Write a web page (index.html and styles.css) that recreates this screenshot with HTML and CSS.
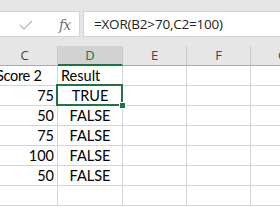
FILE: index.html
```html
<!DOCTYPE html>
<html>
<head>
<meta charset="utf-8">
<link rel="stylesheet" href="styles.css">
</head>
<body>
<div class="app">
  <div class="fbar">
    <div class="ctrls">
      <span class="cancel">✕</span>
      <svg class="check" width="14" height="10" viewBox="0 0 14 10"><path d="M1 5 L5 9 L13 1" fill="none" stroke="#c3c3c3" stroke-width="1.6"/></svg>
      <span class="fx">fx</span>
    </div>
    <div class="formula">=XOR(B2&gt;70,C2=100)</div>
  </div>
  <div class="sheet">
    <div class="row head">
      <div class="c cc">C</div>
      <div class="c cd sel">D</div>
      <div class="c ce">E</div>
      <div class="c cf">F</div>
      <div class="c cg">G</div>
    </div>
    <div class="row">
      <div class="c cc txt">Score 2</div>
      <div class="c cd txt">Result</div>
      <div class="c ce"></div><div class="c cf"></div><div class="c cg"></div>
    </div>
    <div class="row">
      <div class="c cc num">75</div>
      <div class="c cd mid active">TRUE<span class="handle"></span></div>
      <div class="c ce"></div><div class="c cf"></div><div class="c cg"></div>
    </div>
    <div class="row">
      <div class="c cc num">50</div>
      <div class="c cd mid">FALSE</div>
      <div class="c ce"></div><div class="c cf"></div><div class="c cg"></div>
    </div>
    <div class="row">
      <div class="c cc num">75</div>
      <div class="c cd mid">FALSE</div>
      <div class="c ce"></div><div class="c cf"></div><div class="c cg"></div>
    </div>
    <div class="row">
      <div class="c cc num">100</div>
      <div class="c cd mid">FALSE</div>
      <div class="c ce"></div><div class="c cf"></div><div class="c cg"></div>
    </div>
    <div class="row">
      <div class="c cc num">50</div>
      <div class="c cd mid">FALSE</div>
      <div class="c ce"></div><div class="c cf"></div><div class="c cg"></div>
    </div>
    <div class="row">
      <div class="c cc"></div><div class="c cd"></div>
      <div class="c ce"></div><div class="c cf"></div><div class="c cg"></div>
    </div>
  </div>
</div>
</body>
</html>
```
FILE: styles.css
```css
html, body { margin: 0; padding: 0; }
body { width: 280px; height: 207px; overflow: hidden; background: #fff; font-family: Lato, "Liberation Sans", sans-serif; }
.app { width: 280px; height: 207px; overflow: hidden; }
.fbar { background: #e6e6e6; height: 46px; box-sizing: border-box; padding-top: 11px; display: flex; gap: 3px; }
.ctrls { width: 86px; height: 26px; margin-left: -6px; box-sizing: border-box; background: #fff; border: 1px solid #d4d4d4; display: flex; align-items: center; position: relative; }
.cancel { color: #c3c3c3; font-size: 13px; width: 12px; margin-left: -4px; }
.check { margin-left: 16px; margin-top: 1px; }
.fx { font-family: "DejaVu Serif", "Liberation Serif", serif; font-style: italic; color: #6f6f6f; font-size: 14px; margin-left: 26px; margin-top: 1px; letter-spacing: -1px; }
.formula { flex: 1; height: 26px; box-sizing: border-box; background: #fff; border: 1px solid #d4d4d4; border-right: none; padding-left: 10px; font-family: "Open Sans", "Liberation Sans", sans-serif; font-size: 13.5px; line-height: 24px; color: #222; letter-spacing: -0.2px; }
.sheet { position: relative; }
.row { display: flex; height: 20px; }
.c { box-sizing: border-box; height: 20px; border-right: 1px solid #d4d4d4; border-bottom: 1px solid #d4d4d4; font-size: 14.5px; line-height: 19px; color: #000; white-space: nowrap; overflow: hidden; position: relative; }
.cc { width: 58px; }
.cd { width: 65px; }
.ce { width: 64px; }
.cf { width: 64px; }
.cg { flex: 1; border-right: none; }
.head .c { background: #e6e6e6; border-right-color: #c8c8c8; border-bottom: 1px solid #ababab; text-align: center; color: #444; font-family: "Open Sans", "Liberation Sans", sans-serif; font-size: 13px; line-height: 19px; }
.head .cg { text-align: left; padding-left: 27px; }
.head .sel { background: #d2d2d2; color: #217346; border-bottom: 2px solid #217346; }
.head .cc { text-indent: -8px; }
.txt { padding-left: 3px; }
.cc.txt { text-indent: -7px; letter-spacing: -0.3px; }
.num { text-align: right; padding-right: 3px; }
.mid { text-align: center; }
.active { overflow: visible; }
.active::before { content: ""; position: absolute; left: -2px; top: -2px; right: -1px; bottom: -1px; border: 2px solid #217346; }
.handle { position: absolute; right: -4px; bottom: -4px; width: 5px; height: 5px; background: #217346; border: 1px solid #fff; z-index: 2; }
```
